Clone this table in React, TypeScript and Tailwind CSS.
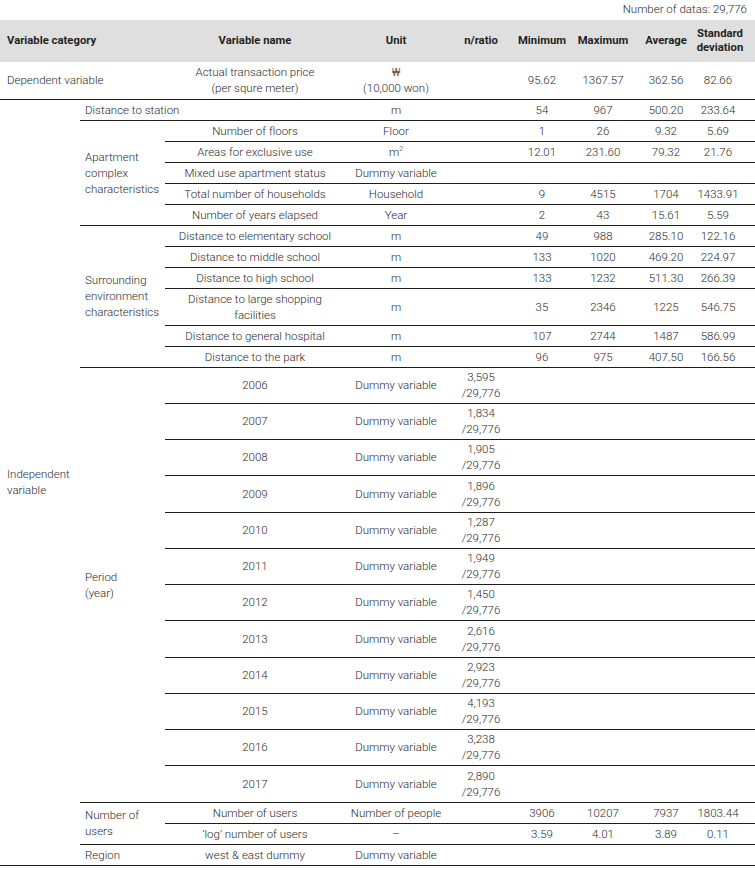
import type { ReactNode } from "react";

const line = "border-b border-[#1c1c1c]";
const num = `${line} text-center align-middle`;

type Row = [ReactNode, ReactNode, string, string, string, string];

const APARTMENT: Row[] = [
  ["Number of floors", "Floor", "1", "26", "9.32", "5.69"],
  [
    "Areas for exclusive use",
    <>
      m<sup className="top-[-5px] text-[7px]">2</sup>
    </>,
    "12.01",
    "231.60",
    "79.32",
    "21.76",
  ],
  ["Mixed use apartment status", "Dummy variable", "", "", "", ""],
  ["Total number of households", "Household", "9", "4515", "1704", "1433.91"],
  ["Number of years elapsed", "Year", "2", "43", "15.61", "5.59"],
];

const SURROUNDING: Row[] = [
  ["Distance to elementary school", "m", "49", "988", "285.10", "122.16"],
  ["Distance to middle school", "m", "133", "1020", "469.20", "224.97"],
  ["Distance to high school", "m", "133", "1232", "511.30", "266.39"],
  [
    <>
      Distance to large shopping
      <br />
      facilities
    </>,
    "m",
    "35",
    "2346",
    "1225",
    "546.75",
  ],
  ["Distance to general hospital", "m", "107", "2744", "1487", "586.99"],
  ["Distance to the park", "m", "96", "975", "407.50", "166.56"],
];

const PERIODS = [
  ["2006", "3,595"],
  ["2007", "1,834"],
  ["2008", "1,905"],
  ["2009", "1,896"],
  ["2010", "1,287"],
  ["2011", "1,949"],
  ["2012", "1,450"],
  ["2013", "2,616"],
  ["2014", "2,923"],
  ["2015", "4,193"],
  ["2016", "3,238"],
  ["2017", "2,890"],
];

function Stats({ row }: { row: Row }) {
  return (
    <>
      <td className={num}>{row[1]}</td>
      <td className={num}></td>
      <td className={num}>{row[2]}</td>
      <td className={num}>{row[3]}</td>
      <td className={num}>{row[4]}</td>
      <td className={`${num} pr-[14px]`}>{row[5]}</td>
    </>
  );
}

export default function App() {
  return (
    <div className="w-[755px] bg-white font-['Roboto','Liberation_Sans',sans-serif] text-[11.5px] font-light leading-[16px] text-[#2b2b2b]">
      <div className="h-[20px] pr-[8px] pt-[1px] text-right">Number of datas: 29,776</div>

      <table className="w-[755px] table-fixed border-collapse">
        <colgroup>
          <col className="w-[80px]" />
          <col className="w-[85px]" />
          <col className="w-[180px]" />
          <col className="w-[102px]" />
          <col className="w-[68px]" />
          <col className="w-[54px]" />
          <col className="w-[68px]" />
          <col className="w-[58px]" />
          <col className="w-[60px]" />
        </colgroup>
        <thead>
          <tr className="h-[42px] bg-[#dfdfdf] text-[11.3px] leading-[14px] text-[#1f1f1f]">
            <th colSpan={2} className="pl-[7px] text-left font-bold">
              Variable category
            </th>
            <th className="font-bold">Variable name</th>
            <th className="font-bold">Unit</th>
            <th className="font-bold">n/ratio</th>
            <th className="font-bold">Minimum</th>
            <th className="font-bold">Maximum</th>
            <th className="font-bold">Average</th>
            <th className="pr-[10px] font-bold">
              Standard
              <br />
              deviation
            </th>
          </tr>
        </thead>
        <tbody>
          <tr className="h-[37px]">
            <td colSpan={2} className={`${line} pl-[7px]`}>
              Dependent variable
            </td>
            <td className={num}>
              Actual transaction price
              <br />
              (per squre meter)
            </td>
            <Stats row={["", <>₩<br />(10,000 won)</>, "95.62", "1367.57", "362.56", "82.66"]} />
          </tr>

          <tr className="h-[21px]">
            <td rowSpan={28} className={`${line} pl-[7px] align-middle`}>
              Independent variable
            </td>
            <td colSpan={2} className={`${line} pl-[5px]`}>
              Distance to station
            </td>
            <Stats row={["", "m", "54", "967", "500.20", "233.64"]} />
          </tr>

          {APARTMENT.map((r, i) => (
            <tr key={i} className="h-[21px]">
              {i === 0 && (
                <td rowSpan={APARTMENT.length} className={`${line} pl-[5px]`}>
                  Apartment complex characteristics
                </td>
              )}
              <td className={num}>{r[0]}</td>
              <Stats row={r} />
            </tr>
          ))}

          {SURROUNDING.map((r, i) => (
            <tr key={i} className={i === 3 ? "h-[37px]" : "h-[21px]"}>
              {i === 0 && (
                <td rowSpan={SURROUNDING.length} className={`${line} pl-[5px]`}>
                  Surrounding environment characteristics
                </td>
              )}
              <td className={num}>{r[0]}</td>
              <Stats row={r} />
            </tr>
          ))}

          {PERIODS.map(([year, n], i) => (
            <tr key={year} className={i % 4 === 3 ? "h-[37px]" : "h-[36px]"}>
              {i === 0 && (
                <td rowSpan={PERIODS.length} className={`${line} pl-[5px]`}>
                  Period
                  <br />
                  (year)
                </td>
              )}
              <td className={num}>{year}</td>
              <td className={num}>Dummy variable</td>
              <td className={num}>
                {n}
                <br />
                /29,776
              </td>
              <td className={line}></td>
              <td className={line}></td>
              <td className={line}></td>
              <td className={line}></td>
            </tr>
          ))}

          <tr className="h-[21px]">
            <td rowSpan={2} className={`${line} pl-[5px]`}>
              Number of users
            </td>
            <td className={num}>Number of users</td>
            <Stats row={["", "Number of people", "3906", "10207", "7937", "1803.44"]} />
          </tr>
          <tr className="h-[21px]">
            <td className={num}>‘log’ number of users</td>
            <Stats row={["", "–", "3.59", "4.01", "3.89", "0.11"]} />
          </tr>
          <tr className="h-[21px]">
            <td className={`${line} pl-[5px]`}>Region</td>
            <td className={num}>west &amp; east dummy</td>
            <Stats row={["", "Dummy variable", "", "", "", ""]} />
          </tr>
        </tbody>
      </table>
    </div>
  );
}
